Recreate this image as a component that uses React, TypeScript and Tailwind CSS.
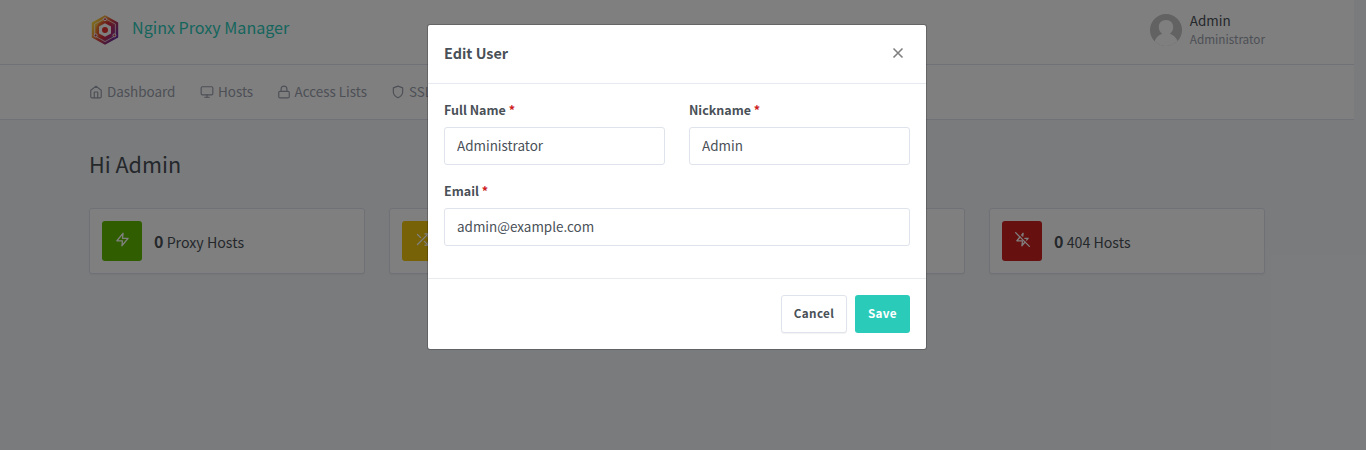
import React from "react";
import { FiHome, FiLock, FiMonitor, FiShield, FiShuffle, FiZap, FiZapOff, FiRadio } from "react-icons/fi";

function Logo() {
  return (
    <svg width="32" height="32" viewBox="0 0 32 32" className="block shrink-0">
      <defs>
        <linearGradient id="shell" x1="0" y1="0.2" x2="0.85" y2="0.85">
          <stop offset="0" stopColor="#fbe63a" />
          <stop offset="0.3" stopColor="#f4a03a" />
          <stop offset="0.55" stopColor="#d8403f" />
          <stop offset="1" stopColor="#6a2a9c" />
        </linearGradient>
        <linearGradient id="core" x1="0" y1="0.3" x2="1" y2="0.7">
          <stop offset="0" stopColor="#f58a2e" />
          <stop offset="0.5" stopColor="#d83038" />
          <stop offset="1" stopColor="#9a2a88" />
        </linearGradient>
      </defs>
      <path d="M16 1.200 L29.200 8.600 V23.400 L16 30.800 L2.800 23.400 V8.600 Z" fill="url(#shell)" />
      <path d="M16 4.400 L26.400 10.200 V21.800 L16 27.600 L5.600 21.800 V10.200 Z" fill="none" stroke="#fff" strokeOpacity="0.75" strokeWidth="0.9" />
      <circle cx="16" cy="16" r="9" fill="url(#core)" />
      <path d="M16 9.200 L22 12.600 V19.400 L16 22.800 L10 19.400 V12.600 Z" fill="#fff" />
      <circle cx="16" cy="16" r="3" fill="#e5302c" />
      <g fill="#c63a50" stroke="#fff" strokeWidth="0.9">
        <circle cx="16" cy="5.2" r="1.5" />
        <circle cx="6.6" cy="21.4" r="1.5" />
        <circle cx="25.4" cy="21.4" r="1.5" />
      </g>
    </svg>
  );
}

function Avatar() {
  return (
    <svg width="32" height="32" viewBox="0 0 32 32" className="block shrink-0">
      <defs>
        <clipPath id="disc">
          <circle cx="16" cy="16" r="16" />
        </clipPath>
      </defs>
      <g clipPath="url(#disc)">
        <rect width="32" height="32" fill="#c4c4c4" />
        <path d="M16 6 c4.400 0 7.200 3 7.200 7.200 0 2.800-1.400 5.200-3.300 6.500 3.800 1.200 6.600 4 8 8.300 L26 32 H6 L4.400 28 c1.300-4.300 4-7.100 7.800-8.300 -2-1.300-3.400-3.700-3.400-6.500 C8.800 9 11.600 6 16 6 Z" fill="#fff" />
      </g>
    </svg>
  );
}

const nav = [
  { label: "Dashboard", Icon: FiHome, width: "w-[111px]" },
  { label: "Hosts", Icon: FiMonitor, width: "w-[76.500px]" },
  { label: "Access Lists", Icon: FiLock, width: "w-[114.500px]" },
  { label: "SSL Certificates", Icon: FiShield, width: "w-[150px]" },
];

const stats = [
  { label: "Proxy Hosts", Icon: FiZap, color: "bg-[#5eba00]" },
  { label: "Redirection Hosts", Icon: FiShuffle, color: "bg-[#f1c40f]" },
  { label: "Streams", Icon: FiRadio, color: "bg-[#467fcf]" },
  { label: "404 Hosts", Icon: FiZapOff, color: "bg-[#cd201f]" },
];

function Field({ label, value }: { label: string; value: string }) {
  return (
    <label className="block min-w-0 flex-1">
      <span className="mb-2 block h-[19px] text-[12.5px] leading-[19px] font-bold">
        {label} <span className="text-[#cd201f]">*</span>
      </span>
      <input
        type="text"
        defaultValue={value}
        className="block h-[38px] w-full rounded-[3px] border border-[#dfe3ec] bg-white px-3 pb-0.5 text-[13.45px] text-[#495057] outline-none"
      />
    </label>
  );
}

export default function App() {
  return (
    <div className="relative h-[450px] w-[1366px] overflow-hidden bg-[#f5f7fb] font-['Noto_Sans_CJK_SC',sans-serif] text-[13.45px] text-[#495057]">
      <div className="w-[1354px]">
        <header className="h-[65px] border-b border-[#dfe3ee] bg-white">
          <div className="ml-[89px] flex h-[60px] w-[1176px] items-center">
            <Logo />
            <span className="ml-[11px] pb-1.5 text-[16.1px] leading-6 text-[#2bcbba]">Nginx Proxy Manager</span>
            <div className="ml-auto flex items-center gap-2">
              <Avatar />
              <div className="pb-0.5">
                <div className="text-[13.45px] leading-[19px]">Admin</div>
                <div className="text-[11.75px] leading-[18px] text-[#9aa0ac]">Administrator</div>
              </div>
            </div>
          </div>
        </header>
        <nav className="h-[55px] border-b border-[#dfe3ee] bg-white">
          <div className="ml-[89px] flex h-[54px] w-[1176px] items-center text-[#9aa0ac]">
            {nav.map(({ label, Icon, width }) => (
              <a key={label} className={`flex items-center gap-1 whitespace-nowrap ${width}`}>
                <Icon size={14} className="shrink-0" />
                <span className="pb-0.5">{label}</span>
              </a>
            ))}
          </div>
        </nav>
        <main className="ml-[89px] w-[1176px] pt-[27px]">
          <h1 className="mb-[28px] text-[21.6px] leading-[33px]">Hi Admin</h1>
          <div className="grid grid-cols-4 gap-6">
            {stats.map(({ label, Icon, color }) => (
              <section key={label} className="flex h-[66px] items-center rounded-[3px] border border-[#dfe3ee] bg-white px-3 shadow-[0_1px_2px_rgba(0,0,0,0.05)]">
                <div className={`flex size-10 shrink-0 items-center justify-center rounded-[3px] text-white ${color}`}>
                  <Icon size={15} className="-mt-[3px]" />
                </div>
                <p className="ml-3 text-[14.2px] leading-6">
                  <b className="text-[16px]">0</b> {label}
                </p>
              </section>
            ))}
          </div>
        </main>
      </div>

      <div className="absolute inset-0 bg-black/50 pt-6 pl-[427px]">
        <div role="dialog" className="w-[500px] rounded-[3px] border border-black/20 bg-white bg-clip-padding">
          <div className="flex h-[59px] items-center justify-between border-b border-[#e5e9f0] px-4 pb-0.5">
            <h2 className="text-[14.4px] font-bold">Edit User</h2>
            <button aria-label="Close" className="mr-[6px] block pb-px text-[#808080]">
              <svg width="12" height="12" viewBox="0 0 12 12" fill="none" stroke="currentColor" strokeWidth="1.6">
                <path d="M1.500 1.500 L10.500 10.500 M10.500 1.500 L1.500 10.500" />
              </svg>
            </button>
          </div>
          <div className="flex h-[194px] flex-col gap-4 px-4 pt-4">
            <div className="flex gap-6">
              <Field label="Full Name" value="Administrator" />
              <Field label="Nickname" value="Admin" />
            </div>
            <div className="flex">
              <Field label="Email" value="admin@example.com" />
            </div>
          </div>
          <div className="flex justify-end gap-2 border-t border-[#e9ecef] p-4 text-[11.7px] font-bold tracking-[0.03em]">
            <button className="h-[38px] w-[66px] rounded-[3px] border border-[#dfe3ec] bg-white pb-0.5 shadow-[0_1px_1px_rgba(0,0,0,0.05)]">Cancel</button>
            <button className="h-[38px] w-[55px] rounded-[3px] bg-[#2bcbba] pb-0.5 text-white">Save</button>
          </div>
        </div>
      </div>
    </div>
  );
}
